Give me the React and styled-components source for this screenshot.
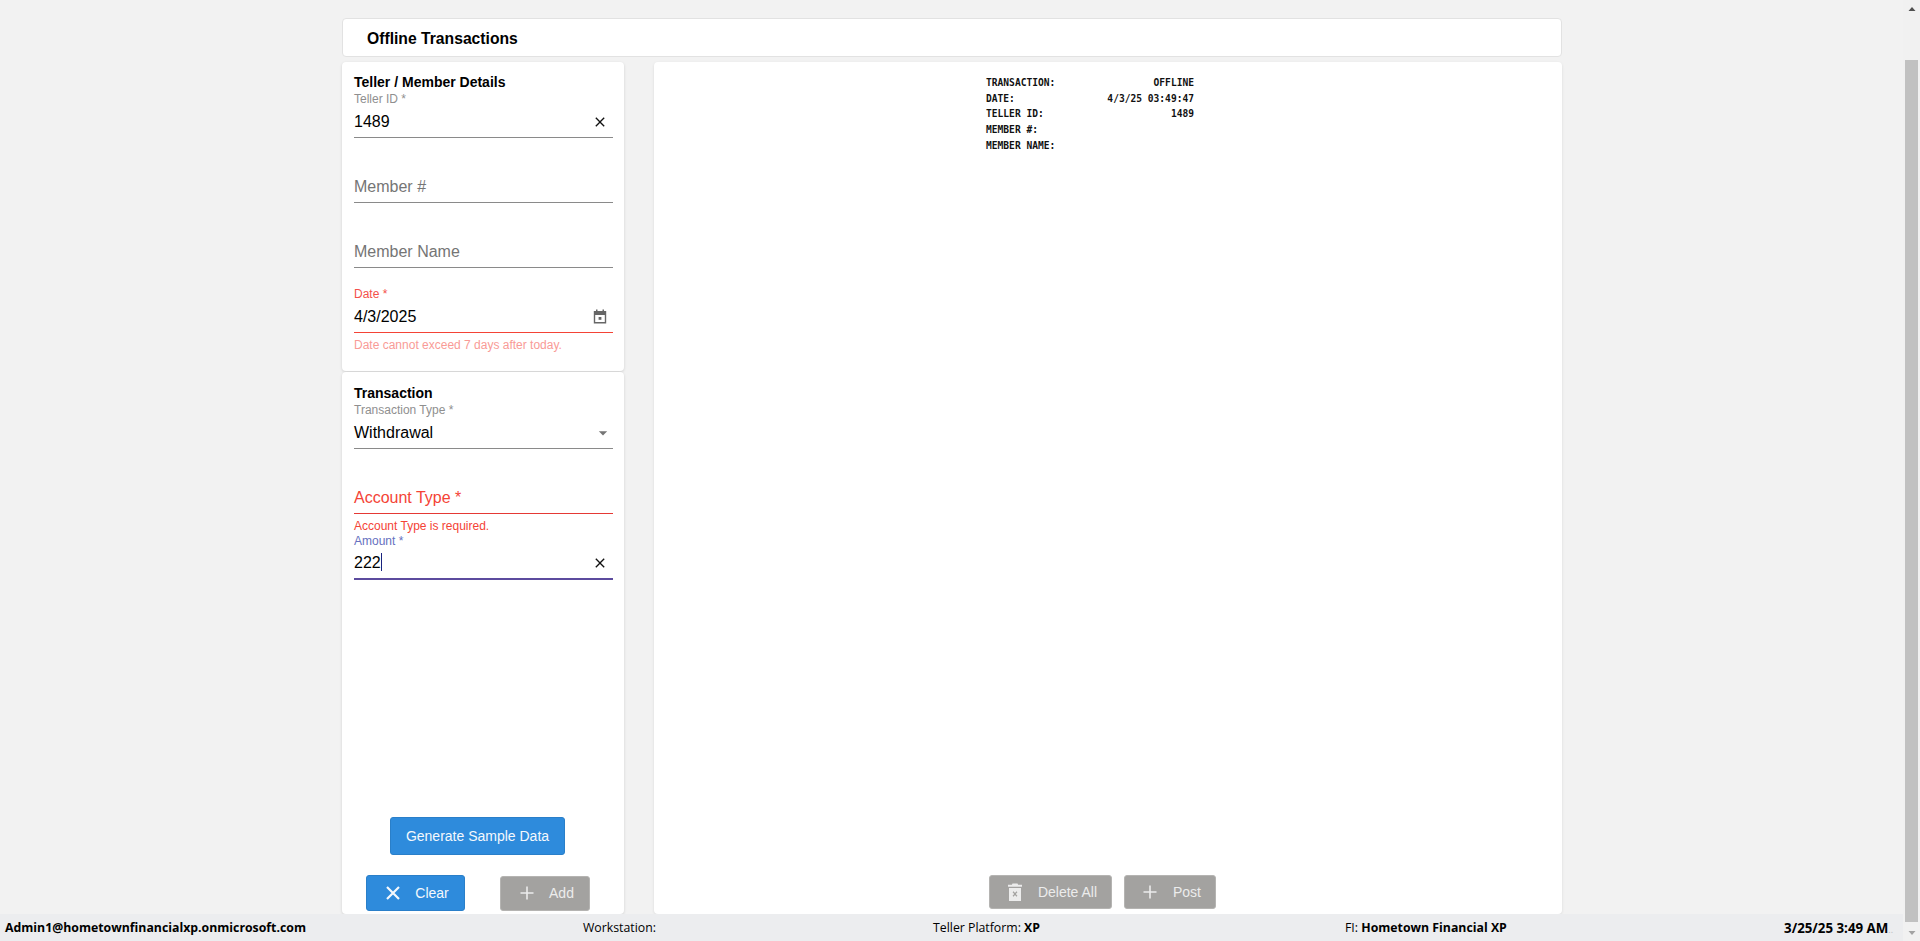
import React from "react";
import styled, { createGlobalStyle } from "styled-components";
import { MdClose, MdArrowDropDown } from "react-icons/md";

const GlobalStyle = createGlobalStyle`
  html, body {
    margin: 0;
    height: 100%;
    overflow: hidden;
    background: #f2f2f2;
  }
  * {
    box-sizing: border-box;
  }
`;

const Shell = styled.div`
  display: flex;
  height: 941px;
  font-family: "Liberation Sans", Arial, sans-serif;
`;
const Page = styled.div`
  flex: 1;
  min-width: 0;
  display: flex;
  flex-direction: column;
`;
const Content = styled.main`
  flex: 1;
  min-height: 0;
  width: 1220px;
  margin-left: 342px;
  padding-top: 18px;
  display: flex;
  flex-direction: column;
  gap: 5px;
`;
const HeaderCard = styled.header`
  height: 39px;
  padding: 2px 0 0 24px;
  display: flex;
  align-items: center;
  background: #fff;
  border: 1px solid #e2e2e2;
  border-radius: 4px;
  font-size: 15.7px;
  font-weight: 700;
  color: #000;
`;
const Columns = styled.div`
  flex: 1;
  min-height: 0;
  display: flex;
  gap: 30px;
`;
const LeftColumn = styled.div`
  width: 282px;
  display: flex;
  flex-direction: column;
  gap: 1px;
`;
const Card = styled.section`
  background: #fff;
  border-radius: 4px;
  box-shadow: 0 1px 3px rgba(0, 0, 0, 0.14);
  padding: ${(p) => (p.$compact ? "12px" : "13px")} 11px 0 12px;
  display: flex;
  flex-direction: column;
  height: ${(p) => (p.$compact ? "309px" : "auto")};
  flex: ${(p) => (p.$compact ? "none" : "1")};
  min-height: 0;
`;
const CardTitle = styled.h2`
  margin: 0;
  height: 17px;
  font-size: 14px;
  line-height: 17px;
  font-weight: 700;
  color: #000;
`;
const Field = styled.div`
  height: ${(p) => p.$height || 65}px;
`;
const FieldLabel = styled.div`
  height: 16px;
  font-size: 12px;
  line-height: 16px;
  color: ${(p) => p.$color || "#8f8f8f"};
`;
const InputRow = styled.div`
  height: 31px;
  display: flex;
  align-items: center;
  padding-bottom: ${(p) => (p.$thick ? "2px" : "1px")};
  border-bottom: ${(p) => (p.$thick ? "2px" : "1px")} solid ${(p) => p.$line || "#8a8a8a"};
  font-size: 16px;
  color: ${(p) => p.$color || "#000"};
`;
const Value = styled.span`
  flex: 1;
`;
const Caret = styled.span`
  display: inline-block;
  width: 1px;
  height: 18px;
  background: #1a237e;
  vertical-align: -3px;
`;
const IconSlot = styled.span`
  width: 26px;
  display: flex;
  justify-content: center;
  align-items: center;
  padding-left: ${(p) => p.$nudge || 0}px;
  color: ${(p) => p.$color || "#111"};
`;
const Helper = styled.div`
  padding-top: 4px;
  font-size: 12px;
  line-height: 16px;
  color: ${(p) => p.$color};
`;
const ActionArea = styled.div`
  margin-top: auto;
  display: flex;
  flex-direction: column;
`;
const SampleRow = styled.div`
  padding-left: 36px;
`;
const ActionRow = styled.div`
  display: flex;
  align-items: center;
  gap: ${(p) => p.$gap}px;
  padding-left: ${(p) => p.$inset}px;
  margin-top: ${(p) => p.$top || 0}px;
  margin-bottom: ${(p) => p.$bottom}px;
`;
const Button = styled.button`
  height: ${(p) => p.$height}px;
  width: ${(p) => p.$width}px;
  padding: 0 0 0 ${(p) => p.$pad || 0}px;
  display: inline-flex;
  align-items: center;
  justify-content: center;
  gap: ${(p) => p.$gap || 0}px;
  border: 1px solid ${(p) => (p.$disabled ? "#b5b4b2" : "#2a7fc9")};
  border-radius: 3px;
  background: ${(p) => (p.$disabled ? "#a3a2a0" : "#2e8bdc")};
  color: ${(p) => (p.$disabled ? "#ececec" : "#f4f8fc")};
  font-family: "Liberation Sans", Arial, sans-serif;
  font-size: 14px;
`;
const ReceiptCard = styled.section`
  flex: 1;
  background: #fff;
  border-radius: 4px;
  box-shadow: 0 1px 3px rgba(0, 0, 0, 0.1);
  display: flex;
  flex-direction: column;
`;
const Receipt = styled.div`
  width: 208px;
  margin: 13px 0 0 332px;
  display: grid;
  grid-template-columns: 1fr auto;
  grid-auto-rows: 15.67px;
  font-family: "DejaVu Sans Mono", "Liberation Mono", monospace;
  font-size: 9.6px;
  line-height: 15.67px;
  font-weight: 700;
  color: #111;
  white-space: pre;
`;
const ReceiptValue = styled.span`
  text-align: right;
`;
const StatusBar = styled.footer`
  height: 27px;
  padding-left: 5px;
  display: grid;
  grid-template-columns: 578px 350px 412px 300px 1fr;
  align-items: center;
  background: #ecedef;
  font-family: "Open Sans", "Noto Sans", sans-serif;
  font-size: 12.3px;
  color: #000;
  white-space: nowrap;
`;
const StatusStrong = styled.b`
  font-weight: 700;
`;
const StatusTime = styled.span`
  justify-self: end;
  padding-right: 10px;
  font-size: 13.3px;
  font-weight: 700;
`;
const FadedDots = styled.span`
  color: #b9bcc2;
  font-weight: 400;
  font-size: 9px;
`;
const Scrollbar = styled.aside`
  width: 17px;
  background: #f1f1f1;
  display: flex;
  flex-direction: column;
  align-items: center;
`;
const ArrowBox = styled.div`
  height: 17px;
  width: 100%;
  display: flex;
  align-items: center;
  justify-content: center;
`;
const Track = styled.div`
  flex: 1;
  width: 100%;
  padding: 43px 2px 2px;
  display: flex;
`;
const Thumb = styled.div`
  flex: 1;
  background: #c1c1c1;
`;

const CalendarIcon = () => (
  <svg width="14" height="15" viewBox="0 0 14 15">
    <path d="M3 0.5h1.5V2h5V0.5H11V2h2.2v12.5H0.8V2H3zM2.2 6v7h9.6V6z" fill="#666" fillRule="evenodd" />
    <rect x="5.6" y="8" width="2.8" height="2.8" fill="#666" />
  </svg>
);
const TrashIcon = () => (
  <svg width="16" height="20" viewBox="0 0 16 20">
    <path d="M5.5 1.5h5l.6 1.2H15v2H1v-2h3.9z" fill="#ececec" />
    <path d="M2 6h12v13H2zM5.6 10.2l1.6 1.8-1.6 1.8.9.9L8 13l1.5 1.7.9-.9L8.8 12l1.6-1.8-.9-.9L8 11l-1.5-1.7z" fill="#ececec" fillRule="evenodd" />
  </svg>
);
const ClearIcon = () => (
  <svg width="16" height="16" viewBox="0 0 16 16">
    <path d="M2 2l12 12M14 2L2 14" stroke="#f4f8fc" strokeWidth="2.2" fill="none" />
  </svg>
);
const PlusIcon = () => (
  <svg width="16" height="16" viewBox="0 0 16 16">
    <path d="M8 1.5v13M1.5 8h13" stroke="#ececec" strokeWidth="1.6" fill="none" />
  </svg>
);
const ArrowIcon = ({ down }) => (
  <svg width="12" height="6" viewBox="0 0 12 6">
    <path d={down ? "M2.5 1h7L6 5z" : "M2.5 5h7L6 1z"} fill={down ? "#a3a3a3" : "#505050"} />
  </svg>
);

const receiptRows = [
  ["TRANSACTION:", "OFFLINE"],
  ["DATE:", "4/3/25 03:49:47"],
  ["TELLER ID:", "1489"],
  ["MEMBER #:", ""],
  ["MEMBER NAME:", ""],
];

const App = () => {
  return (
    <Shell>
      <GlobalStyle />
      <Page>
        <Content>
          <HeaderCard>Offline Transactions</HeaderCard>
          <Columns>
            <LeftColumn>
              <Card $compact>
                <CardTitle>Teller / Member Details</CardTitle>
                <Field>
                  <FieldLabel>Teller ID *</FieldLabel>
                  <InputRow>
                    <Value>1489</Value>
                    <IconSlot><MdClose size={16} /></IconSlot>
                  </InputRow>
                </Field>
                <Field>
                  <FieldLabel />
                  <InputRow $color="#757575">
                    <Value>Member #</Value>
                  </InputRow>
                </Field>
                <Field>
                  <FieldLabel />
                  <InputRow $color="#757575">
                    <Value>Member Name</Value>
                  </InputRow>
                </Field>
                <Field>
                  <FieldLabel $color="#f4504a">Date *</FieldLabel>
                  <InputRow $line="#f44336">
                    <Value>4/3/2025</Value>
                    <IconSlot><CalendarIcon /></IconSlot>
                  </InputRow>
                  <Helper $color="#f99b96">Date cannot exceed 7 days after today.</Helper>
                </Field>
              </Card>
              <Card>
                <CardTitle>Transaction</CardTitle>
                <Field>
                  <FieldLabel>Transaction Type *</FieldLabel>
                  <InputRow>
                    <Value>Withdrawal</Value>
                    <IconSlot $color="#757575" $nudge={6}><MdArrowDropDown size={24} /></IconSlot>
                  </InputRow>
                </Field>
                <Field $height={66}>
                  <FieldLabel />
                  <InputRow $line="#e53935" $color="#f44336">
                    <Value>Account Type *</Value>
                  </InputRow>
                  <Helper $color="#f44336">Account Type is required.</Helper>
                </Field>
                <Field>
                  <FieldLabel $color="#6670c0">Amount *</FieldLabel>
                  <InputRow $line="#5c4b9e" $thick>
                    <Value>222<Caret /></Value>
                    <IconSlot><MdClose size={16} /></IconSlot>
                  </InputRow>
                </Field>
                <ActionArea>
                  <SampleRow>
                    <Button $width={175} $height={38}>Generate Sample Data</Button>
                  </SampleRow>
                  <ActionRow $inset={12} $gap={35} $top={20} $bottom={3}>
                    <Button $width={99} $height={36} $gap={14} $pad={3}><ClearIcon />Clear</Button>
                    <Button $disabled $width={90} $height={35} $gap={14} $pad={3}><PlusIcon />Add</Button>
                  </ActionRow>
                </ActionArea>
              </Card>
            </LeftColumn>
            <ReceiptCard>
              <Receipt>
                {receiptRows.map(([label, value]) => (
                  <React.Fragment key={label}>
                    <span>{label}</span>
                    <ReceiptValue>{value}</ReceiptValue>
                  </React.Fragment>
                ))}
              </Receipt>
              <ActionArea>
                <ActionRow $inset={335} $gap={12} $bottom={5}>
                  <Button $disabled $width={123} $height={34} $gap={15} $pad={3}><TrashIcon />Delete All</Button>
                  <Button $disabled $width={92} $height={34} $gap={15} $pad={3}><PlusIcon />Post</Button>
                </ActionRow>
              </ActionArea>
            </ReceiptCard>
          </Columns>
        </Content>
        <StatusBar>
          <StatusStrong>Admin1@hometownfinancialxp.onmicrosoft.com</StatusStrong>
          <span>Workstation:</span>
          <span>Teller Platform: <StatusStrong>XP</StatusStrong></span>
          <span>FI: <StatusStrong>Hometown Financial XP</StatusStrong></span>
          <StatusTime>3/25/25 3:49 AM<FadedDots>..</FadedDots></StatusTime>
        </StatusBar>
      </Page>
      <Scrollbar>
        <ArrowBox><ArrowIcon /></ArrowBox>
        <Track><Thumb /></Track>
        <ArrowBox><ArrowIcon down /></ArrowBox>
      </Scrollbar>
    </Shell>
  );
};

export default App;
